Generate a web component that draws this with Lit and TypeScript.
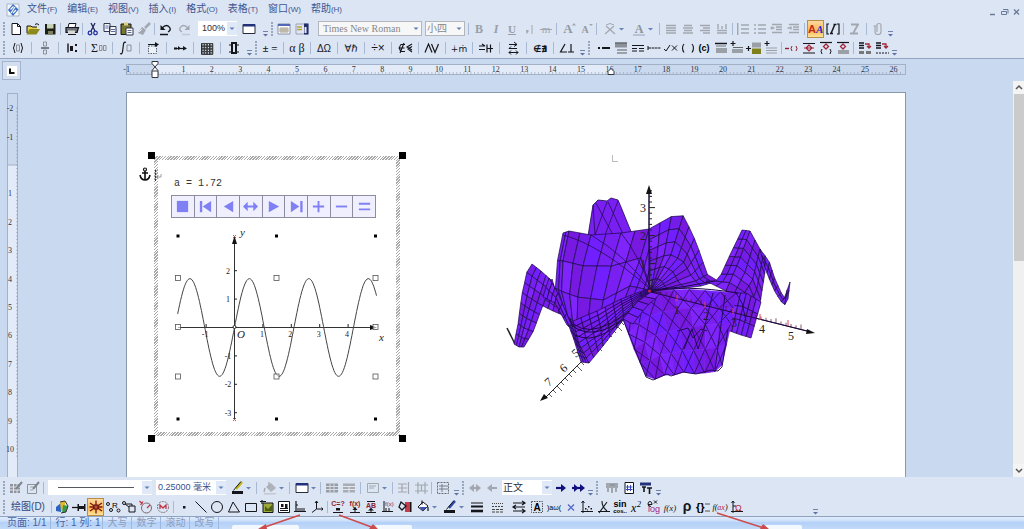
import { LitElement, html, svg, css } from "lit";
import { customElement } from "lit/decorators.js";
import { classMap } from "lit/directives/class-map.js";

type Pt = [number, number];

/* ---------- icon library, 16 x 16 ---------- */

const K = "#15151c";
const G = "#a3a8b0";
const sans = "Liberation Sans, Arial, sans-serif";
const serif = "Liberation Serif, serif";

const glyph = (s: string, size = 11, fill = K, family = serif, style = "") =>
  svg`<text x="8" y="12" text-anchor="middle" font-size=${size} fill=${fill} font-family=${family} style=${style}>${s}</text>`;
const stroke = (d: string, color = K, w = 1) =>
  svg`<path d=${d} fill="none" stroke=${color} stroke-width=${w} />`;
const fill = (d: string, color = K) => svg`<path d=${d} fill=${color} />`;

const lines = (rows: string, color = G) => stroke(rows, color, 1.4);
const grid = (x0: number, y0: number, n: number, m: number, s: number, color: string) => {
  let d = "";
  for (let i = 0; i <= n; i++) d += `M${x0 + i * s} ${y0}v${m * s}`;
  for (let j = 0; j <= m; j++) d += `M${x0} ${y0 + j * s}h${n * s}`;
  return stroke(d, color, 1);
};

const icons: Record<string, unknown> = {
  new: svg`<path d="M4 2.500h5.500l3 3v8H4z" fill="#fff" stroke=${K} />${stroke("M9.500 2.500v3h3")}`,
  open: svg`${fill("M2 5h4l1 1h5v2H5l-3 5z", "#e8d24a")}${fill("M1.500 13.500l3-5.500h10.500l-3.500 5.500z", "#8c8a1c")}${stroke("M2 12V5h4l1 1h5M10 3.500q2-2 4 .5")}`,
  save: svg`${fill("M3 3h10.500v10.500H3z", "#1d1f16")}${fill("M5 3h6.500v4.500H5z", "#c6d2b4")}${fill("M6 10h5v3.500H6z", "#7a8060")}`,
  print: svg`${fill("M5 2.500h7l-1 4H4z", "#fff")}${stroke("M5 2.500h7l-1 4H4z")}${fill("M2 6.500h12v5H2z", "#6d7078")}${stroke("M2 6.500h12.500l-1.500 5H2zM4 13.500h8", K, 1.2)}${fill("M4 9.500h7v3H4z", "#d6d8d2")}`,
  cut: svg`${stroke("M6 2l4 8M10 2L6 10", "#20225a", 1.3)}<circle cx="5" cy="12" r="1.800" fill="none" stroke="#2434a8" stroke-width="1.300" /><circle cx="10.500" cy="12" r="1.800" fill="none" stroke="#2434a8" stroke-width="1.300" />`,
  copy: svg`<path d="M2 2.500h6v8H2zM7.500 5.500h6.500v8H7.500z" fill="#f4f6fb" stroke="#30354e" />${stroke("M3.500 5h3M3.500 7h3M9 8.500h4M9 10.500h4", "#5a6b9c")}`,
  paste: svg`${fill("M2 3h10v10.500H2z", "#77772e")}${stroke("M2 3h10v10.500H2z")}${fill("M5 1.500h4v3H5z", "#d6cf86")}<path d="M7 7h7v7H7z" fill="#fff" stroke="#30354e" />${stroke("M8.500 9.500h4M8.500 11.500h4", "#5a6b9c")}`,
  brush: svg`${stroke("M14 2L9 7", G, 2.500)}${fill("M6 6l4 3-3 5-5-2z", G)}${stroke("M3 11l3-3", "#e7ebf2")}`,
  undo: svg`${stroke("M4 7q5-5 8 0 1 2.500-2 4", K, 1.300)}${fill("M2.500 4v5h5z")}${stroke("M2 13.500h8", K, 1.500)}`,
  redo: svg`${stroke("M12 7Q7 2 4 7q-1 2.500 2 4", G, 1.300)}${fill("M13.500 4v5h-5z", G)}${stroke("M6 13.500h8", "#c3c8d1", 1.500)}`,
  win: svg`<path d="M2 3.500h12v9H2z" fill="#fff" stroke="#262a3c" />${fill("M2 3h12v2.500H2z", "#23307a")}`,
  props: svg`<path d="M2 3h12v10H2z" fill="#fff" stroke="#8890a6" />${fill("M2 3h12v2H2z", "#5468b8")}${grid(4, 7, 4, 2, 2, "#a9a08c")}`,
  side: svg`<path d="M2 3h12v10H2z" fill="#dfe5f2" stroke="#9aa2b6" />${stroke("M3 6h5M3 8.500h5", "#b9a532", 1.500)}${fill("M10 2.500h4.500v11H10z", "#24306c")}${fill("M10.500 6h2v6h-2z", "#e8ecf6")}`,
  bold: glyph("B", 12, "#9a9fa7", serif, "font-weight:bold"),
  ital: glyph("I", 12, "#9a9fa7", serif, "font-weight:bold;font-style:italic"),
  under: svg`${glyph("U", 11, "#9a9fa7", serif, "font-weight:bold")}${stroke("M4 13.500h8", "#9a9fa7")}`,
  dotbar: svg`${fill("M5 9h2.500v2l-2 2z", G)}${stroke("M11 4v9", G)}`,
  strike: svg`${glyph("m", 11, "#a3a8b0", serif)}${stroke("M2 8.500h12", G)}`,
  aup: svg`${glyph("A", 13, "#94999f", serif, "font-weight:bold")}${fill("M12 4.500l2-2.500 2 2.500z", G)}`,
  adn: svg`${glyph("A", 10, "#94999f", serif, "font-weight:bold")}${fill("M12 3l2 2 2-2z", G)}`,
  xcross: svg`${stroke("M3 13l9-8M4 5l9 8", G, 1.300)}${stroke("M4 4q4-3 8 0", G)}`,
  acol: svg`${glyph("A", 12, "#8d9299", serif, "font-weight:bold")}${fill("M2 13h12v2H2z", "#b9c2d6")}`,
  al1: lines("M3 4.500h10M3 7h10M3 9.500h10M3 12h10"),
  al2: lines("M4 4.500h8M3 7h10M4 9.500h8M3 12h10"),
  al3: lines("M3 4.500h10M6 7h7M3 9.500h10M6 12h7"),
  al4: lines("M3 12h10M3 9.500h10M4 3v5M8 5v3M12 3v5"),
  li1: lines("M6 4h8M6 8h8M6 12h8M2 4h1.500M2 8h1.500M2 12h1.500M2.700 2v12"),
  li2: lines("M6 4h8M6 8h8M6 12h8M2 4h2M2 8h2M2 12h2"),
  ou: lines("M3 3.500h10M7 6h6M7 8.500h6M3 11.500h10M1.500 7h4M3 5.500v3"),
  inn: lines("M3 3.500h10M7 6h6M7 8.500h6M3 11.500h10M1.500 7h4M5 5.500v3"),
  aa: svg`<text x="0" y="12" font-size="11" font-weight="bold" font-family=${sans} fill="#c22a20">A</text><text x="8" y="12" font-size="11" font-weight="bold" font-style="italic" font-family=${serif} fill="#2b2bd0">A</text>`,
  bi: svg`${stroke("M4 3H2v10h2M12 3h2v10h-2", K, 1.200)}${stroke("M6 12.500l4-9.500M5 12.500h3M8.500 3.500h3", K, 1.500)}`,
  gi: svg`${stroke("M6 12.500l5-9M4 3.500h8M3 12.500h8", G, 1.800)}`,
  clip: svg`${stroke("M5 5v6q0 2.500 3 2.500t3-2.500V4q0-1.500-2-1.500T7 4v7M3.500 5h3", G, 1.200)}`,

  paren: svg`${stroke("M5 3q-3 5 0 10M11 3q3 5 0 10")}<path d="M6.500 5h3v6h-3z" fill="none" stroke="#8a8f99" />`,
  frac: svg`<path d="M6.500 2h3v4h-3zM6.500 10h3v4h-3z" fill="none" stroke="#8a8f99" />${stroke("M4 8h8")}`,
  mat: svg`${stroke("M4 3.500v9", K, 1.400)}${fill("M6 6h3v5H6zM11 4h2v2h-2zM11 10h2v2h-2z")}`,
  sum: svg`<text x="0" y="12" font-size="12" font-family=${serif} fill=${K}>Σ</text><path d="M8.500 5.500h2.500v5H8.500zM12.500 5.500H15v5h-2.500z" fill="none" stroke="#8a8f99" />`,
  int: svg`${stroke("M8 2.500q-2-1-2.500 1.500l-1 8q-.5 2.500-2.500 1.500", K, 1.200)}<path d="M9 5h4v6H9z" fill="none" stroke="#8a8f99" />`,
  vec: svg`<path d="M3.500 6h8v7.500h-8z" fill="#edf1f8" stroke="#5b616e" stroke-dasharray="1.500 1" />${stroke("M3 4.500h8")}${fill("M10 2l4 2.500-4 2.500z")}`,
  arrdot: svg`${stroke("M2 8.500h12", K, 1.200)}${fill("M6 6l3 2.500L6 10zM11 6l4 2.500-4 2zM2 7.500h3v2H2z")}`,
  table: svg`${grid(2.500, 3.500, 4, 4, 2.700, K)}${grid(3, 3.500, 4, 4, 2.700, "#444")}`,
  zero: svg`${stroke("M6 3h4v10H6z", K, 2)}${stroke("M4 4v2M12 4v2M4 11v2M12 11v2")}`,
  pm: glyph("± =", 11, K, serif, "font-weight:bold"),
  ab: glyph("α β", 12),
  AO: glyph("ΔΩ", 10, K, sans),
  all: glyph("∀ℏ", 10, K, "DejaVu Sans, sans-serif"),
  dx: glyph("÷×", 12, K, sans),
  nin: svg`${stroke("M8 4.500H4q-3 3.500 0 7h4M1.500 8h6M7 3l-4 10M15 4L10 7l5 3M15 6.500l-4 2.500 4 3", K, 1.100)}`,
  wedge: stroke("M1 12.500L4.500 4 8 12.500M7.500 4l3.500 8.500L14.500 4", K, 1.200),
  im: glyph("∔ṁ", 9, K, "DejaVu Sans, sans-serif"),
  eqh: svg`${stroke("M1 6h6M1 9.500h6M4 4l3 2M9 4.500v8M12.500 4.500v8M9 8.500h6", K, 1.200)}`,
  arrs: svg`${stroke("M4 4.500h8M9 2l3 2.500-3 2M12 8.500H4M6 6.500l-2 2M4 12.500h9M6 10.500l-2 2 2 2M11 10.500l2 2-2 2")}`,
  neg: glyph("∉∄", 9, K, "DejaVu Sans, sans-serif", "font-weight:bold"),
  ang: svg`${stroke("M6 4L1.500 12H8M9 12h6M12 4v8", K, 1.200)}`,

  dash: svg`${fill("M2 7h2v2H2z")}${stroke("M6 8h8", K, 2)}`,
  blk: svg`${fill("M2 2.500h12v5H2z", "#8b9099")}${fill("M4 9h10v2H4zM4 12h10v2H4z", "#9ca1a9")}${stroke("M2 3h12", "#55595f")}`,
  dbl: svg`${stroke("M2 5.500h12", K, 1)}${stroke("M2 8.500h5M9 8.500h5M2 11h5M9 11h5", K, 1)}`,
  dashes: svg`${stroke("M2 8h13", K, 1)}${stroke("M2 6v4", K)}<path d="M5 8h10" stroke="#dbe5f3" stroke-dasharray="1 2" />`,
  chk: svg`${stroke("M1 9l2 2 4-6M9 5.500l5 5M14 5.500l-5 5", K, 1)}`,
  prn: stroke("M4 4q-3 4 0 8.500M12 4q3 4 0 8.500", K, 1.100),
  pc: svg`<text x="8" y="11" text-anchor="middle" font-size="9" font-weight="bold" font-family=${sans}>(c)</text>`,
  hdr: svg`${stroke("M2 3.500h12", K, 1.500)}${stroke("M3 6h10", "#777")}${fill("M3 8h11v5H3z", "#9ba0a6")}`,
  pls1: svg`${stroke("M4 1v5M1.500 3.500h5", K, 1.200)}${stroke("M4 7.500h10", "#666")}${fill("M3 9h11v4H3z", "#9ba0a6")}`,
  pls2: svg`${stroke("M2.500 6v5M0 8.500h5", K, 1.200)}${fill("M6 2.500h9v5H6z", "#9ba0a6")}${fill("M6 8.500h9v5.500H6z", "#80801a")}`,
  pls3: svg`${stroke("M4 1v5M1.500 3.500h5", K, 1.200)}${stroke("M3 8h11M3 10.500h11M3 13h11", "#9ba0a6", 1.200)}`,
  r1: svg`${stroke("M1 8.500h4", "#8b2131", 1.400)}${stroke("M8 6q-2 2.500 0 5M12 6q2 2.500 0 5", "#8b2131")}`,
  r2: svg`${stroke("M2 3.500h12M2 13h12", K, 1.200)}${stroke("M8 5L5 8l3 3 3-3zM3 8h10", "#a32638", 1.200)}`,
  r3: svg`${stroke("M2 2.500h12", K, 1.200)}${stroke("M8 4L5.500 6.500 8 9l2.500-2.500z", "#a32638", 1.300)}${stroke("M4 9q-2 2 0 5M12 9q2 2 0 5")}`,
  r4: svg`${stroke("M2 2.500h12", K, 1.200)}${stroke("M8 4L5.500 6.500 8 9l2.500-2.500z", "#a32638", 1.300)}${fill("M3 10h11v4H3z", "#9ba0a6")}`,
  r5: svg`${stroke("M2 3h5M2 5.500h5M2 8h5", K, 1.500)}${stroke("M8 4h4v4M10 6l2 2 2-2", "#a32638", 1.300)}${fill("M2 11h5v3H2zM9 11h5v3H9z", "#777")}`,
  r6: svg`${stroke("M2 3h5M2 5.500h5M2 8h5", K, 1.500)}${stroke("M8 4h4v4M10 6l2 2 2-2", "#a32638", 1.300)}<path d="M2 13h13" stroke=${K} stroke-dasharray="2 1" />`,

  gtab: svg`${fill("M2 4h10v9H2z", "#8f949c")}${stroke("M2 7h10M2 10h10M5.500 4v9M9 4v9", "#e1e6ee")}${stroke("M14 2L8 9", "#7f858e", 2)}`,
  gtab2: svg`<path d="M2.500 4.500h9v9h-9z" fill="none" stroke="#8f949c" />${stroke("M5 7h4M5 10h3", G)}${stroke("M14 2L8 9", "#7f858e", 2)}`,
  pen: svg`${stroke("M13 2L7 9", "#c2b415", 2.500)}${stroke("M12 1.500L6 8.500l-1.500 2", K, 1)}${fill("M3 11h11v3H3z")}`,
  gfill: svg`${fill("M4 7l5-4 5 5-5 4z", "#aeb3bb")}${stroke("M7 2v5M3 8l-1 4", G, 1.300)}${fill("M2 13h12v1.500H2z", "#c4c9d1")}`,
  gg1: svg`${fill("M2 3.500h12v9H2z", "#989da5")}${stroke("M2 6.500h12M2 9.500h12M6 3.500v9M10 3.500v9", "#d6dce6")}`,
  gg2: svg`${fill("M2 3.500h12v9H2z", "#a8adb5")}${stroke("M2 6.500h12M2 9.500h12M8 6v7", "#e2e7ef")}`,
  gbox: svg`<path d="M2.500 3.500h11v9h-11z" fill="none" stroke=${G} />${stroke("M4 6h7M4 8h5", G)}`,
  gd1: svg`${stroke("M2 4h9M2 8h9M2 12h9M12.500 2v12M6 4v8", G, 1.200)}`,
  gd2: svg`${stroke("M5 2v12M8.500 5v6M12 2v12M2 5h13M2 11h13", G, 1.200)}`,
  gd3: svg`<path d="M2.500 2.500h11v11h-11z" fill="none" stroke="#666b74" stroke-dasharray="2 1" />${stroke("M4 6h9M4 9h9M7 4v8", "#7a7f88")}`,
  gl2: svg`${stroke("M3 8h10", G, 2)}${fill("M7 4v8L2 8zM9 4v8l5-4z", G)}`,
  gl1: svg`${stroke("M6 8h7", G, 2)}${fill("M8 4v8L3 8z", G)}`,
  rt1: svg`${stroke("M3 8h6", "#10107a", 2.200)}${fill("M8 4l5 4-5 4z", "#10107a")}`,
  rt2: svg`${stroke("M2 8h9", "#10107a", 2.200)}${fill("M4 4l4.500 4L4 12zM10 4l5 4-5 4z", "#10107a")}`,
  ghat: svg`${fill("M2 3h12v5H2z", G)}${stroke("M4 8v4M8 8v5M12 8v4M6 5h5", "#8e939b", 1.500)}`,
  hash: svg`<path d="M4 2.500h8.500v11H4z" fill="#fff" stroke=${K} />${stroke("M6.500 5v6M9.500 5v6M5 7h6.500M5 9.500h6.500", "#3048b8", 1)}`,
  tt: svg`${fill("M2 2.500h11v3H2z", "#23307a")}${stroke("M4 7h4M6 7v5M9 8h5M11.500 8v6", K, 1.600)}`,

  cube: svg`${fill("M2 8l5-4v9l-5-1z", "#2a62c8")}${fill("M6 3l5-1v7l-4 3z", "#e0b92c")}${fill("M9 6l5 1-2 6-4 1z", "#3a9a4b")}${stroke("M6 3l5-1 3 5-2 6-5 1", "#333")}`,
  pin: svg`${stroke("M1 8.500h6", K, 1.300)}${fill("M6.500 5H8v2h5V5h1.500v7H13v-2H8v2H6.500z")}`,
  burst: svg`${stroke("M8 1.500v13M2 4l12 8M14 4L2 12M1.500 8h13", "#7c1414", 1.300)}<path d="M6 6h4v4H6z" fill="#c94d28" stroke="#501010" />`,
  ok: svg`<circle cx="3" cy="5" r="1.500" fill="none" stroke=${K} /><circle cx="6" cy="11" r="1.500" fill="none" stroke=${K} /><text x="7" y="9" font-size="8" font-family=${sans}>R</text><circle cx="13.500" cy="11.500" r="1.500" fill="none" stroke=${K} />`,
  nodes: svg`<circle cx="3" cy="4" r="1.500" fill="none" stroke=${K} />${stroke("M4 5l4 3")}<path d="M8 7h6v6H8z" fill="none" stroke=${K} />${stroke("M5 5h6v2")}`,
  circ1: svg`<circle cx="8.500" cy="9" r="5" fill="none" stroke="#7d6a70" />${stroke("M1.500 2l3 3M5 2.500L2.500 6M9 9l3-3", "#c23344", 1.200)}`,
  circ2: svg`<circle cx="8" cy="8" r="5.500" fill="none" stroke="#7d6a70" stroke-dasharray="2 1" />${stroke("M5 10V6l3 3 3-3v4", "#c23344", 1.300)}`,
  dot: fill("M7 7h2.500v2.500H7z"),
  line: stroke("M2.500 2.500l11 11"),
  circle: svg`<circle cx="8" cy="8" r="5.500" fill="none" stroke=${K} />`,
  tri: stroke("M2.500 13L7 3l6.500 10z"),
  rect: stroke("M2.500 4.500h11v8h-11z"),
  pic: svg`<path d="M4 4h10v9.500H4z" fill="#9aa83a" stroke=${K} />${fill("M6 7l3 3 4-4v6H6z", "#4c5f12")}${stroke("M1 2.500h6M3 1v4", K, 1.200)}`,
  film: svg`<path d="M2.500 2.500h11v11h-11z" fill="#fff" stroke=${K} />${fill("M5 5h2.500v3H5zM9 5h2.500v4H9z")}${stroke("M4 11.500h8M4 9.500h8")}`,
  axes: svg`${stroke("M4 2v11M2 12.500h12", K, 1.200)}${stroke("M6 9v3M8 9v3M10 9v3M12 9v3M4 6h2")}`,
  axes3: svg`${stroke("M7.500 2v8M7.500 10H14M7.500 10L3 13.500M6 4l1.500-2L9 4M12.500 8.500L14 10l-1.500 1.500", K, 1)}`,
  c1: svg`<text x="8" y="7" text-anchor="middle" font-size="7" font-weight="bold" font-family=${sans} fill="#8b2131">C=?</text>${stroke("M3 13.500h10", K)}${fill("M6 9h4v2.500H6z")}`,
  c2: svg`<text x="8" y="7" text-anchor="middle" font-size="7" font-weight="bold" font-family=${sans} fill="#8b2131">f(x)</text>${stroke("M3 13.500h10M8 8v5", K)}${fill("M5.500 11L8 8l2.500 3z")}`,
  c3: svg`<text x="8" y="8.500" text-anchor="middle" font-size="7" font-weight="bold" font-family=${sans} fill="#8b2131">AB</text>${stroke("M4 2.500h8M3 13.500h10M8 9v4", K)}${fill("M5 11.500h6L8 9z")}`,
  c4: svg`${stroke("M4 2v11M2 12.500h11M6 9v4M9 9v4", K)}<text x="5" y="7" font-size="6" font-family=${sans} fill="#8b2131">f(x)</text>`,
  c5: svg`${fill("M8 3h5v10H8z", "#c53b4a")}${stroke("M4 3l5 4-4 4-3-3z", K, 1.300)}${fill("M13 3h1.500v10H13z")}`,
  bucket: svg`<path d="M3 8l5-5 5 4-5 5z" fill="#fff" stroke=${K} />${fill("M4 8h8l-4 4z", "#3f55b0")}${stroke("M7 1.500v4M13 8v4", K, 1.200)}`,
  pen2: svg`${stroke("M13 2L7 9", "#2e49a8", 2.500)}${stroke("M12 1.500L6 8.500l-1.500 2")}${fill("M2 11h11v3H2z")}`,
  thick: svg`${stroke("M2 4h12", K, 1)}${stroke("M2 7.500h12", K, 2)}${stroke("M2 12h12", K, 2.600)}`,
  dashl: svg`<path d="M2 4.500h12" stroke="#444" stroke-dasharray="1 1" /><path d="M2 7.500h12" stroke="#444" stroke-dasharray="2 1" /><path d="M2 10.500h12M2 13h12" stroke="#444" stroke-dasharray="3 1" />`,
  arrows: svg`${stroke("M2 4h11M11 2l3 2-3 2M14 8H3M2 12h12M5 6L2 8l3 2M11 10l3 2-3 2", K, 1.200)}`,
  boxA: svg`<path d="M2.500 2.500h11v11h-11z" fill="none" stroke="#555" stroke-dasharray="1.500 1" /><text x="8" y="11.500" text-anchor="middle" font-size="10" font-weight="bold" font-family=${sans}>A</text>`,
  wave: svg`<text x="8" y="11" text-anchor="middle" font-size="7" font-family=${sans}>)aω(</text>`,
  times: stroke("M5 5.500l6 6M11 5.500l-6 6", "#5468c8", 1.300),
  dots: svg`${stroke("M4 2v12M2 12.500h12M2.500 4L4 2l1.500 2")}${fill("M6 9h1.500v1.500H6zM9 7h1.500v1.500H9zM11.500 9H13v1.500h-1.500zM8 10.500h1v1H8z")}`,
  ang2: stroke("M2 12.500h12M3 14L11 3M6 2q0 6 5 10", K, 1.100),
  sin: svg`<text x="8" y="8" text-anchor="middle" font-size="9" font-weight="bold" font-family=${sans}>sin</text><text x="8" y="14" text-anchor="middle" font-size="6" font-weight="bold" font-family=${sans}>cos..</text>`,
  x2: svg`<text x="2" y="13" font-size="12" font-style="italic" font-family=${serif}>x</text><text x="8" y="8" font-size="8" font-style="italic" font-family=${serif}>2</text>`,
  log: svg`<text x="8" y="13" text-anchor="middle" font-size="9" font-family=${sans} fill="#a3248a">log</text>${stroke("M2 5.500h4q0-3-2-3T2 5t3 2.500M8 1.500l3 3M11 1.500l-3 3")}`,
  fx: glyph("f(x)", 9, K, serif, "font-style:italic"),
  rho: glyph("ρ", 14, K, sans, "font-weight:bold"),
  brace: svg`<text x="1" y="12" font-size="11" font-weight="bold" font-family=${sans}>{}</text>${stroke("M10 5h5M10 12h5", "#555")}`,
  fax: svg`<text x="8" y="11" text-anchor="middle" font-size="8" font-style="italic" font-family=${serif}>f(<tspan fill="#b02a3a">ax</tspan>)</text>`,
  aome: svg`${stroke("M4 2v12M2 12.500h12M2.500 4L4 2l1.500 2M4 7h3")}<text x="6" y="12" font-size="9" font-family=${sans} fill="#b02a3a">Ω</text>`,
};

/* ---------- toolbar model ---------- */

type Item =
  | { t: "grip" | "sep" | "more" }
  | { t: "gap"; w: number }
  | { t: "g"; w: number; ids: string[] }
  | { t: "text"; w: number; s: string; k: string }
  | { t: "combo"; w: number; v: string; label: string; kind: string };

const GRIP: Item = { t: "grip" };
const SEP: Item = { t: "sep" };
const MORE: Item = { t: "more" };
const gap = (w: number): Item => ({ t: "gap", w });
const g = (w: number, ids: string): Item => ({ t: "g", w, ids: ids.split(" ") });
const combo = (w: number, v: string, label: string, kind = ""): Item => ({ t: "combo", w, v, label, kind });
const each = (w: number, ids: string): Item[] =>
  ids.split(" ").flatMap((id, i) => (i ? [SEP, g(w, id)] : [g(w, id)]));

/* A trailing "+" marks a button with a drop arrow, a trailing "!" one that is switched on. */
const STANDARD: Item[] = [
  GRIP, g(51, "new open save"), SEP, g(17, "print"), SEP, g(67, "cut copy paste brush"), SEP, g(36, "undo redo"), gap(5),
  combo(39, "100%", "显示比例"), g(24, "win"), MORE, GRIP, g(36, "props side"), gap(7),
  combo(104, "Times New Roman", "字体", "boxed mono"), gap(3), combo(40, "小四", "字号", "boxed"), gap(1), SEP,
  g(83, "bold ital under dotbar strike"), SEP, g(35, "aup adn"), SEP, g(58, "xcross+ acol+"), SEP, g(68, "al1 al2 al3 al4"), SEP,
  g(67, "li1 li2 ou inn"), SEP, g(34, "aa! bi"), SEP, g(18, "gi"), SEP, g(17, "clip"), MORE,
];
const FORMULA: Item[] = [
  GRIP, ...each(22, "paren frac mat sum int vec arrdot table zero"), MORE, GRIP,
  ...each(22, "pm ab AO all dx nin wedge im eqh arrs neg ang"), MORE, GRIP, gap(4),
  g(183, "dash blk dbl dashes chk prn pc hdr pls1 pls2 pls3"), SEP, g(67, "r1 r2 r3 r4"), SEP, g(34, "r5 r6"), MORE,
];
const BORDERS: Item[] = [
  GRIP, g(34, "gtab gtab2"), SEP, gap(2), combo(104, "", "线型", "rule"), gap(4), combo(70, "0.25000 毫米", "粗细", "blue"),
  g(28, "pen+"), SEP, g(28, "gfill+"), SEP, g(26, "win+"), SEP, g(35, "gg1 gg2"), SEP, g(27, "gbox+"), SEP, g(34, "gd1 gd2"), SEP,
  g(18, "gd3"), MORE, GRIP, g(34, "gl2 gl1"), gap(2), combo(50, "正文", "样式", "plain"), g(34, "rt1 rt2"), MORE, GRIP, gap(3),
  g(51, "ghat hash tt"), MORE,
];
const DRAWING: Item[] = [
  GRIP, { t: "text", w: 42, s: "绘图", k: "(D)" }, SEP, g(117, "cube pin burst! ok nodes circ1 circ2"), SEP,
  g(149, "dot line circle tri rect pic film axes axes3"), SEP, g(83, "c1 c2 c3 c4 c5"), g(54, "bucket+ pen2+"),
  g(62, "thick dashl arrows"), g(216, "boxA wave times dots ang2 sin x2 log fx rho brace fax aome"), gap(66), MORE,
];

@customElement("tool-strip")
class ToolStrip extends LitElement {
  static properties = { items: { attribute: false } };
  declare items: Item[];

  static styles = css`
    :host { display: flex; align-items: center; height: 19px; padding-left: 1px; overflow: hidden; }
    .grip { flex: none; width: 6px; height: 14px;
      background: radial-gradient(circle at 3px 1px, #98a6bf 1px, transparent 1px) 0 0 / 6px 3px; }
    .sep { flex: none; width: 1px; height: 12px; margin: 0 2px; background: #a9b9d3; }
    .more { flex: none; width: 8px; height: 16px; padding: 0; border: 0; background: none; display: flex; align-items: flex-end; justify-content: center; }
    .gap { flex: none; }
    .group { flex: none; display: flex; height: 18px; }
    .tool { flex: 1 1 0; min-width: 0; display: flex; align-items: center; justify-content: center; padding: 0; border: 1px solid transparent; background: none; }
    .tool.on { background: linear-gradient(#fbd9a0, #fdb84e 60%, #fde39a); border-color: #b98c4a; }
    .pic { flex: none; width: 16px; height: 16px; overflow: visible; }
    .caret { flex: none; width: 7px; height: 6px; }
    .label { flex: none; padding: 0; border: 0; background: none; color: #33477c; font: 10px/16px "Liberation Sans", "Noto Sans CJK SC", sans-serif; white-space: nowrap; }
    .combo { flex: none; display: flex; align-items: center; box-sizing: border-box; height: 15px; background: #fff; position: relative; }
    .combo.boxed { border: 1px solid #b3b6bb; background: #f7f7f7; }
    select { flex: 1; min-width: 0; height: 13px; padding: 0 0 0 4px; border: 0; background: none; appearance: none; color: #2c2f38;
      font: 9px/13px "Liberation Sans", "Noto Sans CJK SC", sans-serif; }
    .boxed select { color: #85888f; padding-left: 1px; font-size: 10px; }
    .boxed.mono select { font-family: "Liberation Serif", serif; padding-left: 4px; }
    .plain select { padding-left: 1px; font-size: 10px; }
    .blue select { color: #34518e; padding-left: 2px; }
    .drop { flex: none; width: 10px; height: 13px; background: #dfe9f8; pointer-events: none; }
    .boxed .drop { background: none; }
    .rule::before { content: ""; position: absolute; left: 10px; right: 18px; top: 7px; height: 1px; background: #55585e; pointer-events: none; }
  `;

  private item(it: Item) {
    switch (it.t) {
      case "grip": return html`<span class="grip"></span>`;
      case "sep": return html`<span class="sep"></span>`;
      case "more": return html`<button class="more" aria-label="更多"><svg class="caret" viewBox="0 0 7 6"><path d="M1 .5h5" stroke="#6f83ad" /><path d="M1 3h5L3.500 5.500z" fill="#5c72a3" /></svg></button>`;
      case "gap": return html`<span class="gap" style="width:${it.w}px"></span>`;
      case "text": return html`<button class="label" style="width:${it.w}px">${it.s}${it.k}</button>`;
      case "combo": return html`<label class="combo ${it.kind}" style="width:${it.w}px">
        <select aria-label=${it.label}><option>${it.v}</option></select>
        <svg class="drop" viewBox="0 0 10 13"><path d="M2.500 5.500h5L5 8z" fill="#5f7fb4" /></svg></label>`;
      case "g": return html`<span class="group" style="width:${it.w}px">${it.ids.map((raw) => {
        const id = raw.replace(/[+!]$/, "");
        return html`<button class=${classMap({ tool: true, on: raw.endsWith("!") })} aria-label=${id}>
          <svg class="pic" viewBox="0 0 16 16">${icons[id]}</svg>${raw.endsWith("+")
            ? html`<svg class="caret" viewBox="0 0 7 6"><path d="M1 2h5L3.500 4.500z" fill="#6681b5" /></svg>` : ""}</button>`;
      })}</span>`;
    }
  }

  render() { return this.items.map((it) => this.item(it)); }
}

/* ---------- rulers ---------- */

const CM = 28.4;

@customElement("ruler-scale")
class RulerScale extends LitElement {
  static properties = { vertical: { type: Boolean }, from: { type: Number }, to: { type: Number }, zero: { type: Number }, end: { type: Number } };
  declare vertical: boolean;
  declare from: number;
  declare to: number;
  declare zero: number;
  declare end: number;

  static styles = css`
    :host { display: block; box-sizing: border-box; background: #cbd9ee; border: 1px solid #a3b1c7; }
    svg { display: block; width: 100%; height: 100%; overflow: visible; }
    text { font: 8px "Liberation Serif", serif; fill: #2c3342; text-anchor: middle; }
  `;

  render() {
    const v = this.vertical;
    const marks: unknown[] = [];
    let ticks = "";
    for (let i = this.from; i <= this.to; i++) {
      const p = this.zero + i * CM;
      if (i !== 0) marks.push(svg`<text x=${v ? 2 : p} y=${v ? p + 3 : 7}>${i}</text>`);
      for (let q = 0; q < 8; q++) {
        const t = p + (q * CM) / 8;
        if (i === this.to && q > 2) break;
        ticks += v ? `M8 ${t}h2` : `M${t} 7v2`;
      }
    }
    return html`<svg>
      ${v
        ? svg`<rect x="0" y=${this.zero} width="9" height="100%" fill="#e3ebf8" /><path d=${`M0 ${this.zero}h9`} stroke="#a3b1c7" />`
        : svg`<rect x=${this.zero} y="0" width=${this.end - this.zero} height="9" fill="#e3ebf8" />`}
      <path d=${ticks} stroke="#8e9bb3" stroke-width="0.600" />${marks}
      ${v ? "" : svg`
        <path d=${`M${this.zero - 3} -3.500h6v2l-3 3.500l3 3.500v7h-6v-7l3-3.500l-3-3.500zM${this.zero - 3} 6h6`} fill="#fff" stroke="#33363d" />
        <path d=${`M${this.end} 3.500l3 3v3h-6v-3z`} fill="#fff" stroke="#33363d" />`}
    </svg>`;
  }
}

/* ---------- y = a sin(3x) plot ---------- */

@customElement("sine-plot")
class SinePlot extends LitElement {
  static styles = css`
    :host { display: block; }
    .readout { margin: 0 0 0 16px; font: 10px/14px "Liberation Mono", monospace; color: #333; }
    .bar { display: flex; width: 205px; box-sizing: border-box; height: 23px; margin: 4px 0 0 13px; border: 1px solid #8d8da0; }
    .bar button { flex: 1 1 0; min-width: 0; padding: 0; border: 0; border-right: 1px solid #8d8da0; background: #efeffd; display: flex; align-items: center; justify-content: center; }
    .bar button:last-child { border-right: 0; }
    .bar svg { width: 15px; height: 15px; fill: #8080f5; }
    .chart { display: block; width: 230px; height: 206px; margin: 4px 0 0 8px; overflow: visible; }
    .num { font: 8px "Liberation Serif", serif; fill: #222; text-anchor: middle; }
    .var { font: italic 11px "Liberation Serif", serif; fill: #222; }
  `;

  render() {
    const u = CM, ox = 68.5, oy = 105.5, a = 1.72;
    let d = "";
    for (let i = 0; i <= 210; i++) {
      const x = -2 + (i * 7) / 210;
      d += `${i ? "L" : "M"}${(ox + x * u).toFixed(1)} ${(oy - a * Math.sin(3 * x) * u).toFixed(1)}`;
    }
    const bars: [string, string][] = [
      ["停止", "M2 2h12v12H2z"],
      ["开始", "M2 2h2.500v12H2zM14 2v12L5 8z"],
      ["后退", "M13 2v12L3 8z"],
      ["往返", "M0 8l5-5v4h6V3l5 5-5 5V9H5v4z"],
      ["前进", "M3 2v12l11-6z"],
      ["结束", "M12 2h2.500v12H12zM2 2v12l9-6z"],
      ["增加", "M7 2h2v5h5v2H9v5H7V9H2V7h5z"],
      ["减少", "M2 7h12v2H2z"],
      ["等于", "M2 4h12v2H2zM2 10h12v2H2z"],
    ];
    const solid: Pt[] = [12, 110.5, 209.5].flatMap((x) => [[x, 14], [x, 197]] as Pt[]);
    const hollow: Pt[] = [[12, 56], [110.5, 56], [209.5, 56], [12, 105], [209.5, 105], [12, 154.5], [110.5, 154.5], [209.5, 154.5]];
    return html`
      <p class="readout">a = 1.72</p>
      <div class="bar">${bars.map(([n, p]) => html`<button aria-label=${n}><svg viewBox="0 0 16 16"><path d=${p} /></svg></button>`)}</div>
      <svg class="chart" viewBox="0 0 230 206">
        <path d="M12 105.500H205M68.500 197V20" stroke="#333" fill="none" />
        <path d="M211 105.500l-7-2.500v5zM68.500 14l-2.500 8h5z" fill="#111" />
        <path d=${[-1, 1, 2, 3, 4].map((n) => `M${ox + n * u} 105v-3`).join("") + [-3, -2, -1, 1, 2].map((n) => `M68 ${oy - n * u}h3`).join("")} stroke="#222" />
        <path d=${d} fill="none" stroke="#444" stroke-width="1" />
        ${[-1, 1, 2, 3, 4].map((n) => svg`<text class="num" x=${ox + n * u - 1} y="115">${n}</text>`)}
        ${[-3, -2, -1, 1, 2].map((n) => svg`<text class="num" x="62" y=${oy - n * u + 3}>${n}</text>`)}
        <text class="var" x="74" y="14">y</text><text class="var" x="213" y="119">x</text><text class="var" x="71" y="116">O</text>
        <path d="M67 13l3 3M70 13l-3 3M67 196l3 3M70 196l-3 3" stroke="#d05050" />
        <circle cx="68.500" cy="105" r="1.500" fill="#fff" stroke="#222" />
        ${solid.map(([x, y]) => svg`<rect x=${x - 1.5} y=${y - 1.5} width="3" height="3" fill="#000" />`)}
        ${hollow.map(([x, y]) => svg`<rect x=${x - 2.5} y=${y - 2.5} width="5" height="5" fill="#fff" fill-opacity="0.600" stroke="#555" stroke-width="0.800" />`)}
      </svg>`;
  }
}

/* ---------- shaded surface ---------- */

const resample = (line: Pt[], n: number): Pt[] => {
  const acc = [0];
  for (let i = 1; i < line.length; i++) acc.push(acc[i - 1] + Math.hypot(line[i][0] - line[i - 1][0], line[i][1] - line[i - 1][1]));
  const total = acc[acc.length - 1] || 1;
  const out: Pt[] = [];
  for (let k = 0; k <= n; k++) {
    const s = (total * k) / n;
    let i = 1;
    while (i < line.length - 1 && acc[i] < s) i++;
    const f = (s - acc[i - 1]) / (acc[i] - acc[i - 1] || 1);
    out.push([line[i - 1][0] + (line[i][0] - line[i - 1][0]) * f, line[i - 1][1] + (line[i][1] - line[i - 1][1]) * f]);
  }
  return out;
};

const TONES = ["#7a1ff2", "#741ce8", "#7f24fb", "#721fff", "#7819e2"];
const INK = "#1a0848";

const mesh = (curves: Pt[][], n: number, m: number, crossed = false) => {
  const base = curves.map((c) => resample(c, n));
  const rows: Pt[][] = [base[0]];
  for (let i = 1; i < base.length; i++)
    for (let s = 1; s <= m; s++)
      rows.push(base[i].map((p, k) => [base[i - 1][k][0] + ((p[0] - base[i - 1][k][0]) * s) / m, base[i - 1][k][1] + ((p[1] - base[i - 1][k][1]) * s) / m] as Pt));
  const f = (p: Pt) => `${p[0].toFixed(1)} ${p[1].toFixed(1)}`;
  const out: unknown[] = [];
  for (let r = 0; r < rows.length - 1; r++)
    for (let k = 0; k < n; k++) {
      const [a, b, c, d] = [rows[r][k], rows[r][k + 1], rows[r + 1][k + 1], rows[r + 1][k]];
      const tone = TONES[(r * 2 + k * 3) % 5];
      out.push(svg`<path d=${`M${f(a)}L${f(b)}L${f(c)}L${f(d)}z`} fill=${tone} stroke=${crossed ? tone : INK} stroke-width="0.700" />`);
      if (crossed) out.push(svg`<path d=${`M${f(a)}L${f(c)}M${f(b)}L${f(d)}`} stroke=${INK} stroke-width="0.700" />`);
    }
  return out;
};

@customElement("surface-plot")
class SurfacePlot extends LitElement {
  static styles = css`
    :host { display: block; }
    svg { display: block; width: 320px; height: 230px; overflow: visible; }
    text { font: 12px "Liberation Serif", serif; fill: #222; text-anchor: middle; }
  `;

  render() {
    const O: Pt[] = [[649, 289], [650, 291], [650, 293]];
    const xt = Array.from({ length: 31 }, (_, i) => `M${650 + i * 5} ${293 + i * 1.25}v${i % 5 ? -3 : -5}`).join("");
    const yt = Array.from({ length: 22 }, (_, i) => `M${548 + i * 4} ${395 - i * 4}l${i % 5 === 2 ? "5 5" : "3 3"}`).join("");
    const zt = Array.from({ length: 18 }, (_, i) => `M648 ${287 - i * 5.6}h${i % 5 === 4 ? 6 : 3}`).join("");
    return html`<svg viewBox="500 180 320 230">
      <path d="M648 293V190M650 293L806 332M660 283L545 398" stroke="#222" fill="none" />
      <path d=${yt} stroke="#333" stroke-width="0.800" />
      <path d="M587 237l5-31 5-5 9 1 4-3 7 2 3 7 11 27z" fill="#7a1ff2" stroke=${INK} stroke-width="0.800" />
      <path d="M595 204l17 32M606 203l-12 33M607 203l15 32M617 202l-13 34M592 206l2 30" stroke=${INK} stroke-width="0.700" fill="none" />
      ${mesh([
        [[562, 234], [557, 258], [553, 285], [563, 316]],
        [[568, 232], [562, 262], [560, 290], [568, 322]],
        [[590, 236], [583, 262], [577, 292], [576, 330]],
        [[620, 234], [611, 264], [603, 298], [596, 335]],
        [[648, 230], [640, 258], [630, 284], [618, 315]]], 3, 2)}
      ${mesh([[[648, 230], [640, 258], [630, 284], [618, 315]], O], 3, 3)}
      <path d="M562 236Q600 246 650 291M590 236Q624 256 650 291M620 234Q638 256 650 291" fill="none" stroke=${INK} stroke-width="0.700" />
      ${mesh([[[648, 230], [666, 220], [675, 215], [683, 217], [695, 243], [707, 277], [717, 282]],
        [[649, 262], [668, 255], [682, 262], [692, 280], [700, 287]],
        [[650, 291], [650, 292], [651, 293]]], 9, 3)}
      ${mesh([
        [[563, 314], [572, 338], [580, 363]], [[572, 322], [578, 345], [588, 364]],
        [[596, 312], [600, 330], [602, 347]], [[620, 300], [622, 310], [623, 320]], O], 8, 3)}
      <path d="M566 318Q590 352 650 293M570 326Q600 350 648 295M574 336Q602 350 640 300" fill="none" stroke=${INK} />
      <path d="M506 329l8 16" stroke="#222" stroke-width="1.500" />
      ${mesh([[[542, 307], [546, 295], [551, 280]], [[552, 312], [554, 303], [554, 290]], [[564, 317], [562, 306], [556, 294]]], 4, 2)}
      ${mesh([
        [[513, 345], [517, 325], [521, 295], [527, 268], [531, 265]], [[518, 348], [524, 325], [531, 300], [537, 279], [540, 272]],
        [[523, 348], [532, 333], [542, 306], [548, 290], [550, 281]]], 8, 2)}
      ${mesh([[[548, 279], [545, 288], [542, 298]], [[557, 294], [555, 298], [554, 304]], [[570, 325], [568, 328], [566, 326]]], 2, 3)}
      ${mesh([
        [[705, 282], [717, 282], [729, 256], [741, 231]], [[725, 292], [738, 262], [749, 232]],
        [[740, 300], [752, 280], [759, 250]], [[752, 325], [759, 305], [765, 266]]], 7, 2)}
      ${mesh([[[734, 294], [745, 294], [760, 303]], [[726, 331], [740, 336], [750, 339]]], 5, 3)}
      ${mesh([
        [[759, 250], [768, 262], [774, 280], [783, 300], [789, 283]],
        [[762, 262], [767, 277], [774, 293], [783, 307], [787, 300]]], 9, 2)}
      ${mesh([
        [[622, 320], [636, 303], [650, 293], [683, 290], [735, 294]],
        [[633, 350], [655, 336], [680, 330], [710, 325], [730, 325]],
        [[645, 377], [652, 381], [666, 375], [670, 377], [682, 373], [697, 375], [717, 372], [721, 366]]], 8, 2, true)}
      ${mesh([[[622, 320], [636, 303], [650, 293]], [[632, 325], [645, 308], [660, 294]]], 5, 1)}
      <path d="M622 320L645 378l7 3 14-6 4 2 12-4 13 2 15-4 7 1 4-4 6-38M735 294l6 10 4 18M676 332l11-3 5 10 8-9 6 2M683 350l8-20 6 20 6-18M724 296l-10 74M712 294l-9 36" fill="none" stroke=${INK} stroke-width="0.900" />
      <path d="M650 293q30-8 87 1M650 291q32-2 64-9M650 293L806 332M648 293V190" fill="none" stroke=${INK} />
      <path d=${xt} stroke="#5a1030" stroke-width="0.700" /><path d=${zt} stroke="#222" />
      <path d="M676 302v-6M704 309v-6M732 315v-6M759 321v-6M787 327v-6" stroke="#e04060" />
      <path d="M648 186l3 9h-6zM814 334l-9 1 1-5zM539 402l8-3-4-4z" fill="#111" />
      <circle cx="648.500" cy="292" r="1.500" fill="#c32a4a" />
      <text x="642" y="213">3</text><text x="642" y="241">2</text><text x="642" y="269">1</text>
      <text x="676" y="315">1</text><text x="705" y="321">2</text><text x="733" y="328">3</text><text x="761" y="334">4</text><text x="790" y="341">5</text>
      <text transform="translate(550 386) rotate(-40)">7</text><text transform="translate(565 372) rotate(-40)">6</text><text transform="translate(577 357) rotate(-40)">5</text>
    </svg>`;
  }
}

/* ---------- application shell ---------- */

@customElement("app-root")
class AppRoot extends LitElement {
  static styles = css`
    :host { display: flex; flex-direction: column; height: 100vh; overflow: hidden; position: relative; background: #c9d9ef;
      font-family: "Liberation Sans", "Noto Sans CJK SC", sans-serif; }
    .head { flex: none; background: #dbe5f3; border-bottom: 1px solid #94a6c1; padding-bottom: 1px; }
    .menu { display: flex; align-items: center; height: 19px; padding: 0 2px 0 5px; }
    .logo { flex: none; width: 16px; height: 16px; margin-right: 6px; }
    .menu a { margin-right: 10px; color: #3f5590; text-decoration: none; font-size: 10px; line-height: 16px; white-space: nowrap; }
    .key { font-size: 8px; }
    .winbtns { margin-left: auto; display: flex; gap: 1px; padding-top: 4px; }
    .winbtns button { width: 11px; height: 12px; padding: 0; border: 0; background: none; }
    .winbtns svg { display: block; width: 11px; height: 12px; }
    .work { flex: 1; min-height: 0; display: flex; }
    .left { flex: none; width: 20px; padding: 2px 0 0 2px; display: flex; flex-direction: column; }
    .tab { flex: none; width: 19px; height: 19px; padding: 0; border: 1px solid #a5b4cc; background: #d3dff1; display: flex; align-items: center; justify-content: center; }
    .tab svg { width: 12px; height: 12px; }
    .left ruler-scale { flex: 1; width: 11px; margin: 13px 0 0 5px; border-bottom: 0; }
    .doc { flex: 1; min-width: 0; display: flex; flex-direction: column; padding: 5px 107px 0 104px; }
    .doc ruler-scale { flex: none; height: 11px; }
    .page { flex: 1; min-height: 0; margin-top: 17px; padding: 60px 0 0 11px; box-sizing: border-box; background: #fff;
      border: 1px solid #8b97aa; border-bottom: 0; display: flex; align-items: flex-start; overflow: hidden; }
    .anchor { flex: none; width: 14px; height: 14px; margin-top: 14px; }
    .object { flex: none; position: relative; width: 246px; height: 280px; box-sizing: border-box; margin: 3px 0 0 2px; padding: 4px;
      background: repeating-linear-gradient(135deg, #a8a8a8 0 1px, #fff 1px 2px); }
    .canvas { height: 100%; box-sizing: border-box; padding-top: 17px; background: #fff; }
    .h { position: absolute; width: 7px; height: 7px; background: #000; }
    .tl { left: -6px; top: -4px; } .tr { right: -6px; top: -4px; } .bl { left: -6px; bottom: -6px; } .br { right: -6px; bottom: -6px; }
    .caretmark { position: absolute; left: 0; top: 12px; width: 8px; height: 14px; }
    .crop { position: absolute; left: 111px; top: -24px; width: 6px; height: 7px; box-sizing: border-box; border: solid #bbb; border-width: 0 0 1px 1px; }
    .surface { flex: none; position: relative; margin: 26px 0 0 101px; }
    .scroll { flex: none; width: 11px; margin-top: 22px; display: flex; flex-direction: column; background: #f0f0f0; }
    .scroll button { flex: none; height: 13px; padding: 0; border: 0; background: #f4f4f4; }
    .scroll svg { display: block; width: 11px; height: 13px; }
    .thumb { flex: 45; background: #cbcbcb; margin-left: 1px; }
    .space { flex: 55; }
    .foot { flex: none; background: #dbe5f3; padding-top: 1px; }
    .status { flex: none; height: 12px; display: flex; align-items: center; overflow: hidden; border-top: 1px solid #8fa3c2; padding-left: 7px;
      background: linear-gradient(#e2edfc, #c9defa 35%, #b4d0f8 45%, #c2daf9); color: #4a62a0; font-size: 10px; line-height: 12px; white-space: nowrap; }
    .status span { padding-right: 4px; margin-right: 4px; border-right: 1px solid #9db7dd; }
    .status .off { color: #8d9dbb; }
    .status .wide { padding-right: 2px; }
    .notes { position: absolute; left: 0; bottom: 0; width: 1024px; height: 17px; pointer-events: none; }
  `;

  render() {
    const menu: [string, string][] = [["文件", "F"], ["编辑", "E"], ["视图", "V"], ["插入", "I"], ["格式", "O"], ["表格", "T"], ["窗口", "W"], ["帮助", "H"]];
    return html`
      <header class="head">
        <nav class="menu">
          <svg class="logo" viewBox="0 0 16 16"><path d="M2 2h12v12H2z" fill="#f4f7fc" stroke="#a9b4c8" /><path d="M8 2l5.500 5.500L8 14 3 8z" fill="#3b6fc4" /><path d="M6 11l4-6M5.500 7.500l3-3M8 11l3-3" stroke="#fff" stroke-width="1.200" /></svg>
          ${menu.map(([t, k]) => html`<a href="#">${t}<span class="key">(${k})</span></a>`)}
          <div class="winbtns">
            <button aria-label="最小化"><svg viewBox="0 0 11 12"><path d="M3 8.500h5" stroke="#6b7a98" stroke-width="1.500" /></svg></button>
            <button aria-label="还原"><svg viewBox="0 0 11 12"><path d="M4 3.500h5v4M2.500 5.500h5v3h-5z" fill="none" stroke="#6b7a98" /></svg></button>
            <button aria-label="关闭"><svg viewBox="0 0 11 12"><path d="M3 3.500l5 5M8 3.500l-5 5" stroke="#6b7a98" stroke-width="1.300" /></svg></button>
          </div>
        </nav>
        <tool-strip .items=${STANDARD}></tool-strip>
        <tool-strip .items=${FORMULA}></tool-strip>
      </header>
      <main class="work">
        <div class="left">
          <button class="tab" aria-label="制表符"><svg viewBox="0 0 12 12"><path d="M1 1h10v10H1z" fill="#fff" /><path d="M4 3.500V8h4.500" fill="none" stroke="#111" stroke-width="2" /></svg></button>
          <ruler-scale vertical .from=${-2} .to=${10} .zero=${71} .end=${400}></ruler-scale>
        </div>
        <div class="doc">
          <ruler-scale .from=${-1} .to=${26} .zero=${28} .end=${484}></ruler-scale>
          <article class="page">
            <svg class="anchor" viewBox="0 0 14 14"><path d="M7 4v9M4 6h6M2 8q1 5 5 5t5-5" fill="none" stroke="#111" stroke-width="1.600" /><circle cx="7" cy="2.500" r="1.500" fill="none" stroke="#111" stroke-width="1.200" /></svg>
            <section class="object">
              <div class="canvas"><sine-plot></sine-plot></div>
              <svg class="caretmark" viewBox="0 0 8 14"><path d="M1.500 2v11" stroke="#333" stroke-dasharray="2 1" /><path d="M7 6v3H3M4.500 7.500L3 9l1.500 1.500" fill="none" stroke="#888" stroke-width="0.800" /></svg>
              <i class="h tl"></i><i class="h tr"></i><i class="h bl"></i><i class="h br"></i>
            </section>
            <div class="surface"><i class="crop"></i><surface-plot></surface-plot></div>
          </article>
        </div>
        <div class="scroll">
          <button aria-label="向上"><svg viewBox="0 0 11 13"><path d="M3 8l3-3 3 3" fill="none" stroke="#555" stroke-width="1.500" /></svg></button>
          <div class="thumb"></div><div class="space"></div>
          <button aria-label="向下"><svg viewBox="0 0 11 13"><path d="M3 5l3 3 3-3" fill="none" stroke="#555" stroke-width="1.500" /></svg></button>
        </div>
      </main>
      <footer class="foot">
        <tool-strip .items=${BORDERS}></tool-strip>
        <tool-strip .items=${DRAWING}></tool-strip>
        <div class="status"><span>页面: 1/1</span><span class="wide">行: 1 列: 1</span><span class="off">大写</span><span class="off">数字</span><span class="off">滚动</span><span class="off">改写</span></div>
      </footer>
      <svg class="notes" viewBox="0 0 1024 17">
        <g fill="#f3f8ff"><rect x="232" y="13" width="67" height="6" rx="2" /><rect x="375" y="13" width="37" height="6" rx="2" /><rect x="765" y="13" width="37" height="6" rx="2" /></g>
        <path d="M300 3L262 16M339 3L374 16M717 1L764 16" stroke="#cc4b4b" stroke-width="1.500" />
        <path d="M258 17l8-5 1 5zM378 17l-5-5-4 5zM769 17l-6-5-3 5z" fill="#cc4b4b" />
      </svg>`;
  }
}
